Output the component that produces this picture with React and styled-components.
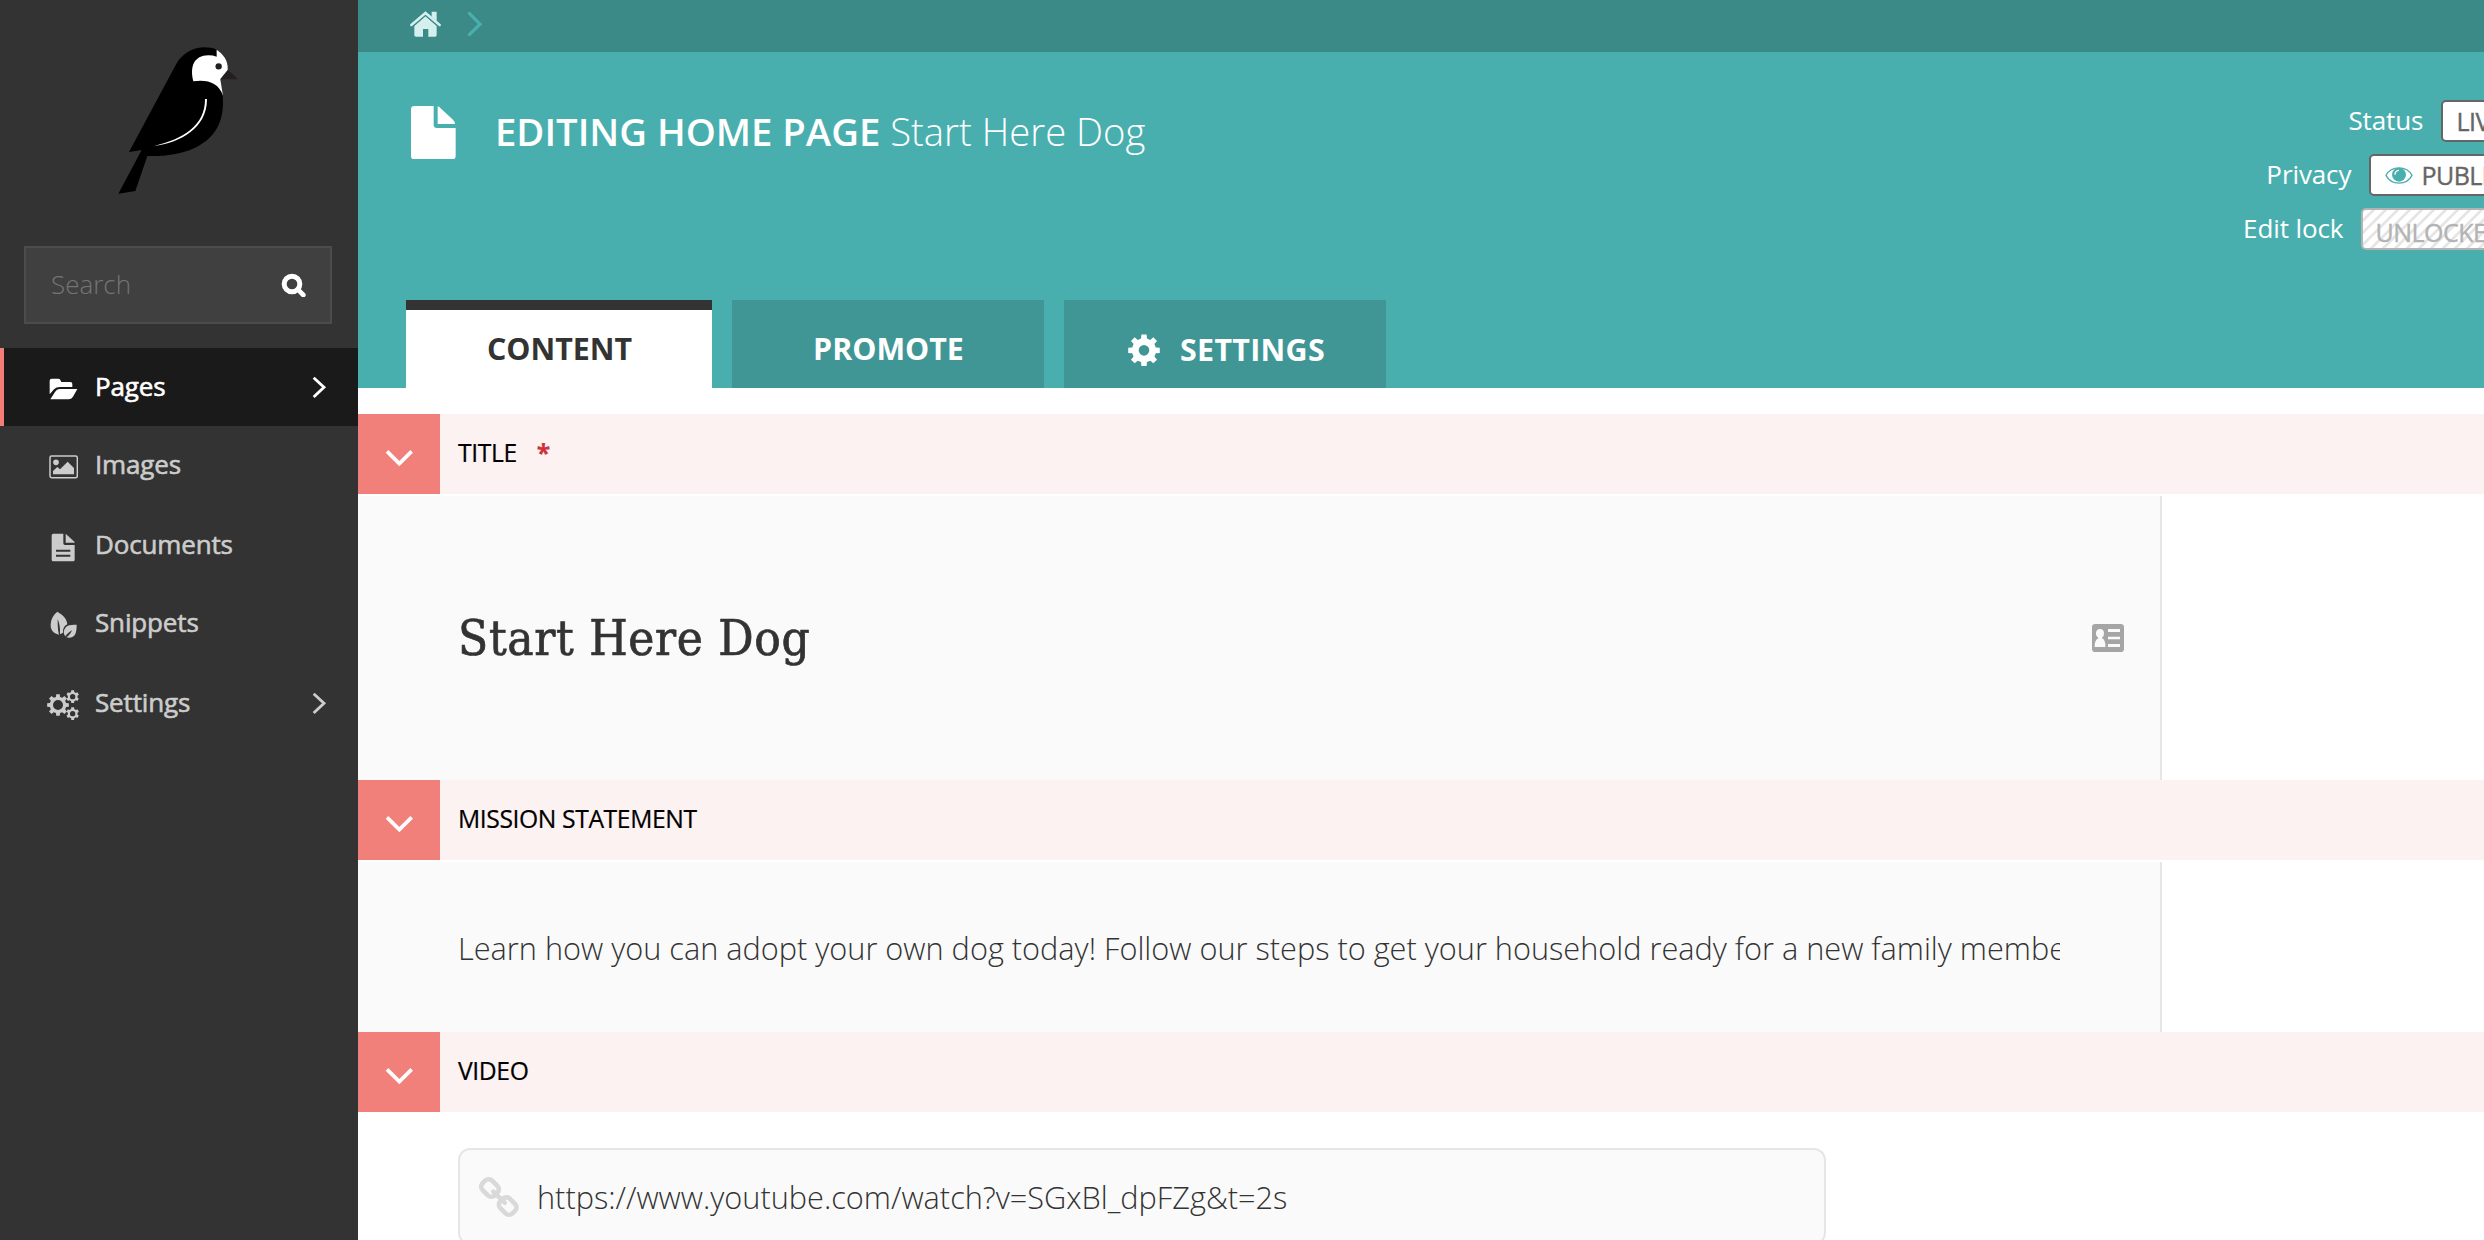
import React from 'react';
import styled, { createGlobalStyle } from 'styled-components';

const sans = '"Open Sans", "Noto Sans", sans-serif';

const GlobalStyle = createGlobalStyle`
  * { box-sizing: border-box; }
  body { margin: 0; background: #fff; font-family: ${sans}; overflow: hidden; }
`;

const Page = styled.div`
  display: flex;
  width: 2484px;
  height: 1240px;
  overflow: hidden;
`;

/* Sidebar */
const Sidebar = styled.aside`
  flex: 0 0 358px;
  background: #333;
`;
const Logo = styled.div`
  height: 246px;
  padding: 46.6px 0 0 118px;
`;
const Search = styled.div`
  display: flex;
  align-items: center;
  justify-content: space-between;
  width: 308px;
  height: 78px;
  margin: 0 0 24px 24px;
  padding: 0 24px 0 25px;
  border: 2px solid #4c4c4c;
  background: #404040;
  color: #757575;
  font-size: 26px;
  font-weight: 300;
  line-height: 36px;
`;
const SearchText = styled.span`
  padding-bottom: 2px;
`;
const NavList = styled.nav`
  display: flex;
  flex-direction: column;
`;
const NavItem = styled.a`
  display: flex;
  align-items: center;
  height: 78px;
  padding: 0 31px 0 ${(p) => (p.$active ? 42 : 46)}px;
  border-left: ${(p) => (p.$active ? '4px solid #f37e77' : 'none')};
  background: ${(p) => (p.$active ? '#1a1a1a' : 'transparent')};
  color: ${(p) => (p.$active ? '#fff' : '#ccc')};

  &:nth-child(odd):not(:first-child) { margin-top: 2px; }
`;
const NavIcon = styled.span`
  display: flex;
  justify-content: center;
  width: 35px;
  margin-right: 14px;
  padding-top: 4px;
`;
const NavLabel = styled.span`
  flex: 1;
  padding-bottom: 2px;
  font-size: 26px;
  letter-spacing: -0.15px;
  line-height: 36px;
  -webkit-text-stroke: 0.6px currentColor;
`;

/* Main column */
const Main = styled.main`
  flex: 1;
  min-width: 0;
  overflow: hidden;
`;
const Breadcrumb = styled.nav`
  display: flex;
  align-items: center;
  gap: 26px;
  height: 52px;
  padding: 0 0 4px 52px;
  background: #3b8a88;
`;
const Header = styled.header`
  display: flex;
  flex-direction: column;
  justify-content: space-between;
  height: 336px;
  padding: 48px 0 0 48px;
  background: #49afae;
  color: #fff;
`;
const HeaderTop = styled.div`
  display: flex;
  align-items: flex-start;
`;
const FileIcon = styled.span`
  flex: 0 0 89px;
  padding: 6px 0 0 5px;
`;
const Title = styled.h1`
  flex: 0 0 auto;
  margin: 4px 0 0;
  font-size: 38.25px;
  font-weight: 600;
  line-height: 54px;
  white-space: nowrap;
`;
const Subtitle = styled.span`
  font-weight: 300;
`;
const StatusPanel = styled.div`
  flex: 0 0 auto;
  display: flex;
  flex-direction: column;
  align-items: flex-end;
  gap: 12px;
  width: 340px;
  margin-left: 1040px;
`;
const StatusRow = styled.div`
  display: flex;
  align-items: center;
  gap: 18px;
  height: 42px;
  font-size: 26px;
  line-height: 40px;
  white-space: nowrap;
`;
const StatusLabel = styled.span`
  padding-bottom: 2px;
  letter-spacing: -0.1px;
`;
const Badge = styled.span`
  display: flex;
  gap: 8px;
  align-items: center;
  width: ${(p) => p.$width}px;
  height: 42px;
  padding: ${(p) => (p.$locked ? '6px' : '0')} 0 0 ${(p) => p.$inset}px;
  border: 2px solid ${(p) => (p.$locked ? '#b3b3b3' : '#666')};
  border-radius: 5px;
  background: ${(p) =>
    p.$locked
      ? 'repeating-linear-gradient(135deg, #fff 0 6px, #e6e6e6 6px 8.5px)'
      : '#fff'};
  color: ${(p) => (p.$locked ? '#b3b3b3' : '#666')};
  font-size: 25px;
  letter-spacing: -0.5px;
  -webkit-text-stroke: 0.4px currentColor;
`;
const Tabs = styled.div`
  display: flex;
  gap: 20px;
`;
const Tab = styled.a`
  display: flex;
  align-items: center;
  justify-content: center;
  gap: 20px;
  width: ${(p) => p.$width}px;
  height: 88px;
  padding-top: ${(p) => (p.$active ? 0 : p.$settings ? 12 : 10)}px;
  padding-left: ${(p) => (p.$settings ? 3 : 1)}px;
  border-top: ${(p) => (p.$active ? '10px solid #333' : 'none')};
  background: ${(p) => (p.$active ? '#fff' : '#3f9694')};
  color: ${(p) => (p.$active ? '#333' : '#fff')};
  font-size: 30.4px;
  letter-spacing: ${(p) => (p.$settings ? 0.3 : 0)}px;
  font-weight: 700;
  line-height: 40px;
`;

/* Editor sections */
const Form = styled.div`
  padding-top: 26px;
`;
const SectionHead = styled.div`
  display: flex;
  height: 80px;
  background: #fcf2f1;
`;
const Toggle = styled.span`
  display: flex;
  align-items: center;
  justify-content: center;
  width: 82px;
  padding-top: 8px;
  background: #f2807a;
`;
const SectionLabel = styled.span`
  padding: 21px 0 0 18px;
  color: #000;
  font-size: 24.7px;
  letter-spacing: -0.4px;
  line-height: 36px;
  -webkit-text-stroke: 0.2px currentColor;
`;
const Required = styled.span`
  margin-left: 20px;
  color: #cd3238;
  font-weight: 700;
`;
const SectionBody = styled.div`
  display: flex;
  align-items: center;
  justify-content: space-between;
  width: 1804px;
  height: ${(p) => p.$height}px;
  margin-top: 2px;
  padding: 0 36px 0 100px;
  border-right: 2px solid #e6e6e6;
  background: #fafafa;
  color: #333;
`;
const PageTitle = styled.span`
  padding-top: 1px;
  font-family: "DejaVu Serif Condensed", "DejaVu Serif", serif;
  font-size: 49px;
  letter-spacing: 0.7px;
  line-height: 64px;
  -webkit-text-stroke: 0.7px currentColor;
`;
const Mission = styled.span`
  width: 1602px;
  padding-top: 2px;
  overflow: hidden;
  font-size: 30.7px;
  font-weight: 300;
  line-height: 44px;
  white-space: nowrap;
`;
const VideoInput = styled.div`
  display: flex;
  align-items: center;
  gap: 17px;
  width: 1368px;
  height: 97px;
  margin: 36px 0 0 100px;
  padding: 0 18px;
  border: 2px solid #e6e6e6;
  border-radius: 12px;
  background: #fafafa;
  color: #333;
  font-size: 30.7px;
  font-weight: 300;
  line-height: 44px;
`;

/* Icons are drawn on a grid of three units per pixel */
const Icon = ({ box, children }) => {
  const [, , w, h] = box.split(' ').map(Number);
  return (
    <svg viewBox={box} width={w / 3} height={h / 3} fill="currentColor">
      {children}
    </svg>
  );
};

const gearPath = (cx, cy, r, hole, teeth) => {
  const step = (Math.PI * 2) / teeth;
  const at = (a, d) => `${(cx + Math.sin(a) * d).toFixed(2)} ${(cy - Math.cos(a) * d).toFixed(2)}`;
  const points = [];
  for (let i = 0; i < teeth; i += 1) {
    const a = i * step;
    points.push(at(a - step * 0.31, r * 0.76), at(a - step * 0.21, r), at(a + step * 0.21, r), at(a + step * 0.31, r * 0.76));
  }
  return `M${points.join('L')}ZM${cx - hole} ${cy}a${hole} ${hole} 0 1 0 ${hole * 2} 0a${hole} ${hole} 0 1 0 ${-hole * 2} 0Z`;
};

const Bird = () => (
  <Icon box="354 140 362 442">
    <path fill="#000" d="M650 148C640 143 626 141 612 141C572 142 541 166 526 196L387 455L425 449L355 580L406 572L442 467C545 470 617 440 650 385C668 354 671 320 668 285L655 200Z" />
    <path fill="#fff" d="M650 148C668 160 686 180 683 209L661 237L669 286C657 247 620 236 580 243C569 198 582 166 625 165Q640 165 650 169Z" />
    <path fill="#231f20" d="M684 209L714 237H661Z" />
    <circle fill="#231f20" cx="656" cy="198" r="9.5" />
    <path fill="#fff" d="M615 296H621C621 385 540 427 462 437C550 416 616 375 615 296Z" />
  </Icon>
);
const Magnifier = () => (
  <Icon box="844 822 76 74">
    <circle cx="877" cy="855" r="23.5" fill="none" stroke="#fff" strokeWidth="15" />
    <path d="M895 872L911 888" fill="none" stroke="#fff" strokeWidth="14" strokeLinecap="round" />
  </Icon>
);
const Folder = () => (
  <Icon box="146 145 88 66">
    <path d="M148 194V153Q148 147 154 147H173Q179 147 180 151L183 157H210Q216 157 216 163V172H178Q168 172 161 179Z" />
    <path d="M178 178H231L218 201Q213 209 205 209H150L164 187Q169 178 178 178Z" />
  </Icon>
);
const Picture = () => (
  <Icon box="147 375 88 71">
    <rect x="150" y="378" width="82" height="65" rx="5" fill="none" stroke="currentColor" strokeWidth="4.5" />
    <circle cx="168" cy="397" r="8.5" />
    <path d="M159 433V423L172 411L180 418L203 395L222 414V433Z" />
  </Icon>
);
const Doc = () => (
  <Icon box="154 607 74 87">
    <path fillRule="evenodd" d="M161 609H191V638Q191 643 196 643H225V687Q225 692 220 692H161Q156 692 156 687V614Q156 609 161 609ZM169 657V663H212V657ZM169 672V678H212V672Z" />
    <path d="M198 609L225 634V636H198Z" />
  </Icon>
);
const Leaf = () => (
  <Icon box="149 844 83 84">
    <path d="M171 846C190 857 200 868 201 884C192 888 187 897 188 909L179 914C180 895 177 880 172 868C172 884 172 900 176 915C158 912 150 900 151 884C152 868 159 855 171 846Z" />
    <path d="M229 885C229 910 225 923 206 924L198 923C206 918 211 912 215 902C207 907 200 913 195 920C187 910 190 896 201 889C209 885 218 885 229 885Z" />
  </Icon>
);
const Gears = () => (
  <Icon box="142 1079 98 92">
    <path fillRule="evenodd" d={gearPath(175, 1124, 33, 15, 8)} />
    <path fillRule="evenodd" d={gearPath(219, 1099, 19.5, 8, 6)} />
    <path fillRule="evenodd" d={gearPath(219, 1150, 19.5, 8, 6)} />
  </Icon>
);
const Gear = () => (
  <Icon box="54 44 96 98">
    <path fillRule="evenodd" d={gearPath(102, 93, 48, 16, 8)} />
  </Icon>
);
const NavArrow = () => (
  <Icon box="936 138 44 68">
    <path d="M941 143L972 172L941 201" fill="none" stroke="currentColor" strokeWidth="8.5" />
  </Icon>
);
const Home = () => (
  <Icon box="1229 32 94 80">
    <g fill="#d5efee">
      <path d="M1242 77L1275.500 48L1309 77V104Q1309 109 1304 109H1284V86H1268V109H1247Q1242 109 1242 104Z" />
      <path d="M1234 74L1275.500 38L1317 74" fill="none" stroke="#3b8a88" strokeWidth="13" />
      <path d="M1294 34H1309V62L1294 49Z" />
      <path d="M1233 74L1275.500 38L1318 74" fill="none" stroke="#d5efee" strokeWidth="7.500" strokeLinecap="round" />
    </g>
  </Icon>
);
const CrumbArrow = () => (
  <Icon box="1400 36 48 78">
    <path d="M1407 43L1439 75.500L1407 107" fill="none" stroke="#49afae" strokeWidth="9.5" strokeLinecap="round" />
  </Icon>
);
const PageGlyph = () => (
  <Icon box="1234 318 134 160">
    <path d="M1244 318H1302V374Q1302 384 1312 384H1368V468Q1368 478 1358 478H1244Q1234 478 1234 468V328Q1234 318 1244 318Z" />
    <path d="M1314 319Q1318 320 1322 324L1360 359Q1366 365 1366 372H1314Z" />
  </Icon>
);
const Eye = () => (
  <Icon box="599 324 84 56">
    <path d="M602 352C618 322 664 322 680 352C664 383 618 383 602 352Z" fill="none" stroke="#49afae" strokeWidth="4" />
    <circle cx="641" cy="350" r="21" fill="#49afae" />
    <path d="M629 350Q629 338 641 337" fill="none" stroke="#fff" strokeWidth="4" />
  </Icon>
);
const Chevron = () => (
  <Icon box="1155 356 86 54">
    <path d="M1161 363L1198 400L1235 363" fill="none" stroke="#fff" strokeWidth="11" />
  </Icon>
);
const Card = () => (
  <Icon box="276 432 96 84">
    <path fill="#a5a5a5" fillRule="evenodd" d="M286 432H362Q372 432 372 442V506Q372 516 362 516H286Q276 516 276 506V442Q276 432 286 432ZM324 447V456H360V447ZM324 470V478H360V470ZM324 492V501H360V492ZM284 501H316Q317 478 305 474Q313 468 312 459Q311 447 300 447Q289 447 288 459Q287 468 296 474Q283 480 284 501Z" />
  </Icon>
);
const Link = () => (
  <Icon box="54 73 126 126">
    <g fill="none" stroke="#d9d9d9" strokeWidth="14">
      <rect x="-26" y="-20" width="52" height="40" rx="15" transform="translate(90 109) rotate(45)" />
      <rect x="-26" y="-20" width="52" height="40" rx="15" transform="translate(143 163) rotate(45)" />
      <path d="M100 120L134 153" strokeLinecap="round" />
    </g>
  </Icon>
);

const NAV = [
  { label: 'Pages', icon: <Folder />, active: true, arrow: true },
  { label: 'Images', icon: <Picture /> },
  { label: 'Documents', icon: <Doc /> },
  { label: 'Snippets', icon: <Leaf /> },
  { label: 'Settings', icon: <Gears />, arrow: true },
];

const Section = ({ label, required }) => (
  <SectionHead>
    <Toggle><Chevron /></Toggle>
    <SectionLabel>
      {label}
      {required && <Required>*</Required>}
    </SectionLabel>
  </SectionHead>
);

export default function App() {
  return (
    <Page>
      <GlobalStyle />
      <Sidebar>
        <Logo><Bird /></Logo>
        <Search><SearchText>Search</SearchText><Magnifier /></Search>
        <NavList>
          {NAV.map((item) => (
            <NavItem key={item.label} $active={item.active}>
              <NavIcon>{item.icon}</NavIcon>
              <NavLabel>{item.label}</NavLabel>
              {item.arrow && <NavArrow />}
            </NavItem>
          ))}
        </NavList>
      </Sidebar>
      <Main>
        <Breadcrumb><Home /><CrumbArrow /></Breadcrumb>
        <Header>
          <HeaderTop>
            <FileIcon><PageGlyph /></FileIcon>
            <Title>EDITING HOME PAGE <Subtitle>Start Here Dog</Subtitle></Title>
            <StatusPanel>
              <StatusRow><StatusLabel>Status</StatusLabel><Badge $width={84} $inset={13}>LIVE</Badge></StatusRow>
              <StatusRow><StatusLabel>Privacy</StatusLabel><Badge $width={156} $inset={14}><Eye />PUBLIC</Badge></StatusRow>
              <StatusRow><StatusLabel>Edit lock</StatusLabel><Badge $width={164} $inset={12} $locked>UNLOCKED</Badge></StatusRow>
            </StatusPanel>
          </HeaderTop>
          <Tabs>
            <Tab $width={306} $active>CONTENT</Tab>
            <Tab $width={312}>PROMOTE</Tab>
            <Tab $width={322} $settings><Gear />SETTINGS</Tab>
          </Tabs>
        </Header>
        <Form>
          <Section label="TITLE" required />
          <SectionBody $height={284}><PageTitle>Start Here Dog</PageTitle><Card /></SectionBody>
          <Section label="MISSION STATEMENT" />
          <SectionBody $height={170}>
            <Mission>Learn how you can adopt your own dog today! Follow our steps to get your household ready for a new family member</Mission>
          </SectionBody>
          <Section label="VIDEO" />
          <VideoInput><Link /><span>https://www.youtube.com/watch?v=SGxBl_dpFZg&amp;t=2s</span></VideoInput>
        </Form>
      </Main>
    </Page>
  );
}
